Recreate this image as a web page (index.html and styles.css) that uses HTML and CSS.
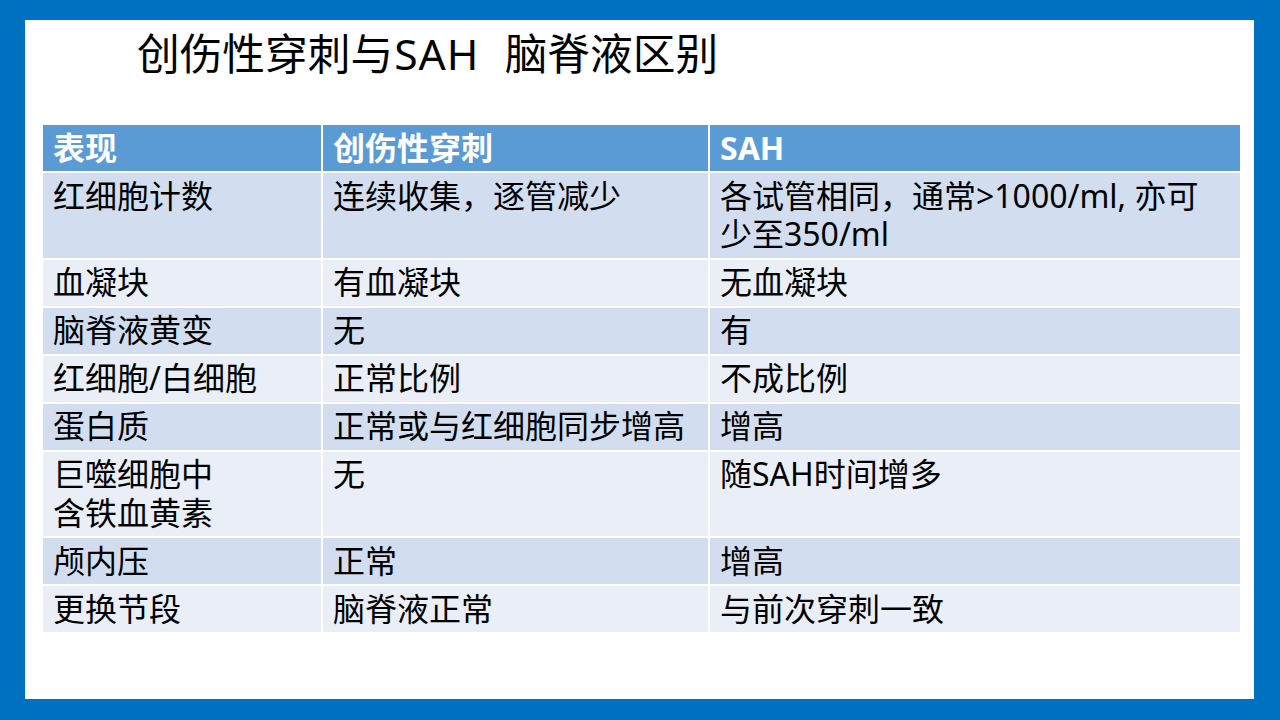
FILE: index.html
```html
<!DOCTYPE html>
<html lang="zh-CN">
<head>
<meta charset="utf-8">
<title>创伤性穿刺与SAH 脑脊液区别</title>
<link rel="stylesheet" href="styles.css">
</head>
<body>
<div class="slide">
  <h1 class="title">创伤性穿刺与<span class="latin">SAH&nbsp;&nbsp;</span>脑脊液区别</h1>
  <table class="cmp">
    <colgroup>
      <col class="c1"><col class="c2"><col class="c3">
    </colgroup>
    <thead>
      <tr><th>表现</th><th>创伤性穿刺</th><th>SAH</th></tr>
    </thead>
    <tbody>
      <tr class="odd"><td>红细胞计数</td><td>连续收集，逐管减少</td><td>各试管相同，通常&gt;1000/ml, 亦可<br>少至350/ml</td></tr>
      <tr class="even"><td>血凝块</td><td>有血凝块</td><td>无血凝块</td></tr>
      <tr class="odd"><td>脑脊液黄变</td><td>无</td><td>有</td></tr>
      <tr class="even"><td>红细胞/白细胞</td><td>正常比例</td><td>不成比例</td></tr>
      <tr class="odd"><td>蛋白质</td><td>正常或与红细胞同步增高</td><td>增高</td></tr>
      <tr class="even"><td>巨噬细胞中<br>含铁血黄素</td><td>无</td><td>随SAH时间增多</td></tr>
      <tr class="odd"><td>颅内压</td><td>正常</td><td>增高</td></tr>
      <tr class="even"><td>更换节段</td><td>脑脊液正常</td><td>与前次穿刺一致</td></tr>
    </tbody>
  </table>
</div>
</body>
</html>
```
FILE: styles.css
```css
html, body {
  margin: 0;
  height: 720px;
  overflow: hidden;
}
body {
  background: #0070c0;
  padding: 20px 26px 21px 25px;
  box-sizing: border-box;
  font-family: "Noto Sans", "Noto Sans CJK SC", sans-serif;
  color: #000;
}
.slide {
  background: #fff;
  height: 679px;
  display: flex;
  flex-direction: column;
}
.title {
  margin: 8px 0 0 112px;
  font-size: 42.7px;
  line-height: 52px;
  font-weight: normal;
  white-space: nowrap;
}
.title .latin {
  letter-spacing: 1px;
  padding-left: 1px;
  padding-right: 1px;
}
.cmp {
  margin: 45px 0 0 18px;
  width: 1197px;
  table-layout: fixed;
  border-collapse: separate;
  border-spacing: 0;
  font-size: 32px;
  line-height: 38.5px;
}
.c1 { width: 278px; }
.c2 { width: 387px; }
.c3 { width: 532px; }
.cmp th, .cmp td {
  box-sizing: border-box;
  padding: 3.75px 10px;
  text-align: left;
  vertical-align: top;
  border-bottom: 2px solid #fff;
  border-left: 2px solid #fff;
  white-space: nowrap;
}
.cmp th:first-child, .cmp td:first-child {
  border-left: 0;
}
.cmp th {
  background: #5b9bd5;
  color: #fff;
  font-weight: bold;
}
.cmp tr.odd td { background: #d2deef; }
.cmp tr.even td { background: #eaeff7; }
```
